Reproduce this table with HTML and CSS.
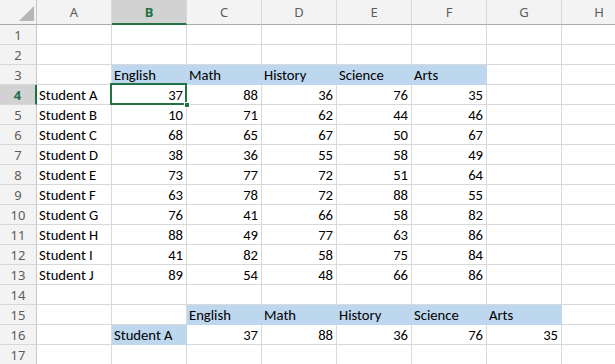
FILE: index.html
```html
<!DOCTYPE html>
<html>
<head>
<meta charset="utf-8">
<link rel="stylesheet" href="styles.css">
</head>
<body>
<div class="sheet">
  <div class="corner"><span class="tri"></span></div>
  <div class="ch">A</div><div class="ch sel-col">B</div><div class="ch">C</div><div class="ch">D</div><div class="ch">E</div><div class="ch">F</div><div class="ch">G</div><div class="ch">H</div>

  <div class="rh">1</div><div class="c"></div><div class="c"></div><div class="c"></div><div class="c"></div><div class="c"></div><div class="c"></div><div class="c"></div><div class="c"></div>
  <div class="rh">2</div><div class="c"></div><div class="c"></div><div class="c"></div><div class="c"></div><div class="c"></div><div class="c"></div><div class="c"></div><div class="c"></div>
  <div class="rh">3</div><div class="c"></div><div class="c fill">English</div><div class="c fill">Math</div><div class="c fill">History</div><div class="c fill">Science</div><div class="c fill">Arts</div><div class="c"></div><div class="c"></div>
  <div class="rh sel-row">4</div><div class="c">Student A</div><div class="c n active">37<span class="handle"></span></div><div class="c n">88</div><div class="c n">36</div><div class="c n">76</div><div class="c n">35</div><div class="c"></div><div class="c"></div>
  <div class="rh">5</div><div class="c">Student B</div><div class="c n">10</div><div class="c n">71</div><div class="c n">62</div><div class="c n">44</div><div class="c n">46</div><div class="c"></div><div class="c"></div>
  <div class="rh">6</div><div class="c">Student C</div><div class="c n">68</div><div class="c n">65</div><div class="c n">67</div><div class="c n">50</div><div class="c n">67</div><div class="c"></div><div class="c"></div>
  <div class="rh">7</div><div class="c">Student D</div><div class="c n">38</div><div class="c n">36</div><div class="c n">55</div><div class="c n">58</div><div class="c n">49</div><div class="c"></div><div class="c"></div>
  <div class="rh">8</div><div class="c">Student E</div><div class="c n">73</div><div class="c n">77</div><div class="c n">72</div><div class="c n">51</div><div class="c n">64</div><div class="c"></div><div class="c"></div>
  <div class="rh">9</div><div class="c">Student F</div><div class="c n">63</div><div class="c n">78</div><div class="c n">72</div><div class="c n">88</div><div class="c n">55</div><div class="c"></div><div class="c"></div>
  <div class="rh">10</div><div class="c">Student G</div><div class="c n">76</div><div class="c n">41</div><div class="c n">66</div><div class="c n">58</div><div class="c n">82</div><div class="c"></div><div class="c"></div>
  <div class="rh">11</div><div class="c">Student H</div><div class="c n">88</div><div class="c n">49</div><div class="c n">77</div><div class="c n">63</div><div class="c n">86</div><div class="c"></div><div class="c"></div>
  <div class="rh">12</div><div class="c">Student I</div><div class="c n">41</div><div class="c n">82</div><div class="c n">58</div><div class="c n">75</div><div class="c n">84</div><div class="c"></div><div class="c"></div>
  <div class="rh">13</div><div class="c">Student J</div><div class="c n">89</div><div class="c n">54</div><div class="c n">48</div><div class="c n">66</div><div class="c n">86</div><div class="c"></div><div class="c"></div>
  <div class="rh">14</div><div class="c"></div><div class="c"></div><div class="c"></div><div class="c"></div><div class="c"></div><div class="c"></div><div class="c"></div><div class="c"></div>
  <div class="rh">15</div><div class="c"></div><div class="c"></div><div class="c fill">English</div><div class="c fill">Math</div><div class="c fill">History</div><div class="c fill">Science</div><div class="c fill">Arts</div><div class="c"></div>
  <div class="rh">16</div><div class="c"></div><div class="c fill">Student A</div><div class="c n">37</div><div class="c n">88</div><div class="c n">36</div><div class="c n">76</div><div class="c n">35</div><div class="c"></div>
  <div class="rh">17</div><div class="c"></div><div class="c"></div><div class="c"></div><div class="c"></div><div class="c"></div><div class="c"></div><div class="c"></div><div class="c"></div>
</div>
</body>
</html>
```
FILE: styles.css
```css
html, body {
  margin: 0;
  padding: 0;
  background: #ffffff;
  overflow: hidden;
}
body {
  width: 615px;
  height: 364px;
}
.sheet {
  display: grid;
  grid-template-columns: 37px repeat(8, 75px);
  grid-template-rows: 25px;
  grid-auto-rows: 20px;
  font-family: "Carlito", "Lato", "Liberation Sans", sans-serif;
  font-size: 14.667px;
  color: #000;
}
.corner {
  position: relative;
  background: #f3f3f3;
  border-right: 1px solid #c8c8c8;
  border-bottom: 1px solid #ababab;
}
.tri {
  position: absolute;
  right: 2px;
  bottom: 3px;
  width: 0;
  height: 0;
  border-left: 15px solid transparent;
  border-bottom: 15px solid #b6b6b6;
}
.ch {
  background: #f3f3f3;
  border-right: 1px solid #d8d8d8;
  border-bottom: 1px solid #ababab;
  text-align: center;
  font-family: "Noto Sans", "Open Sans", sans-serif;
  font-size: 13px;
  line-height: 25px;
  color: #5c5c5c;
}
.ch.sel-col {
  background: #d2d2d2;
  border-bottom: 2px solid #217346;
  color: #217346;
  font-weight: bold;
  line-height: 24px;
}
.rh {
  background: #f3f3f3;
  border-right: 1px solid #c8c8c8;
  border-bottom: 1px solid #d8d8d8;
  text-align: center;
  font-family: "Noto Sans", "Open Sans", sans-serif;
  font-size: 13px;
  line-height: 20px;
  color: #5c5c5c;
}
.rh.sel-row {
  background: #d2d2d2;
  border-right: 2px solid #217346;
  color: #217346;
  font-weight: bold;
}
.c {
  position: relative;
  border-right: 1px solid #d9d9d9;
  border-bottom: 1px solid #d9d9d9;
  padding: 0 3px 0 2px;
  line-height: 20px;
  white-space: nowrap;
}
.n {
  text-align: right;
}
.fill {
  background: #bdd7ee;
  border-right-color: #bdd7ee;
  border-bottom-color: #bdd7ee;
}
.active::before {
  content: "";
  position: absolute;
  left: -2px;
  top: -2px;
  right: -1px;
  bottom: -1px;
  border: 2px solid #217346;
}
.handle {
  position: absolute;
  right: -4px;
  bottom: -4px;
  width: 4px;
  height: 4px;
  background: #217346;
  border: 1px solid #ffffff;
  z-index: 1;
}
```
